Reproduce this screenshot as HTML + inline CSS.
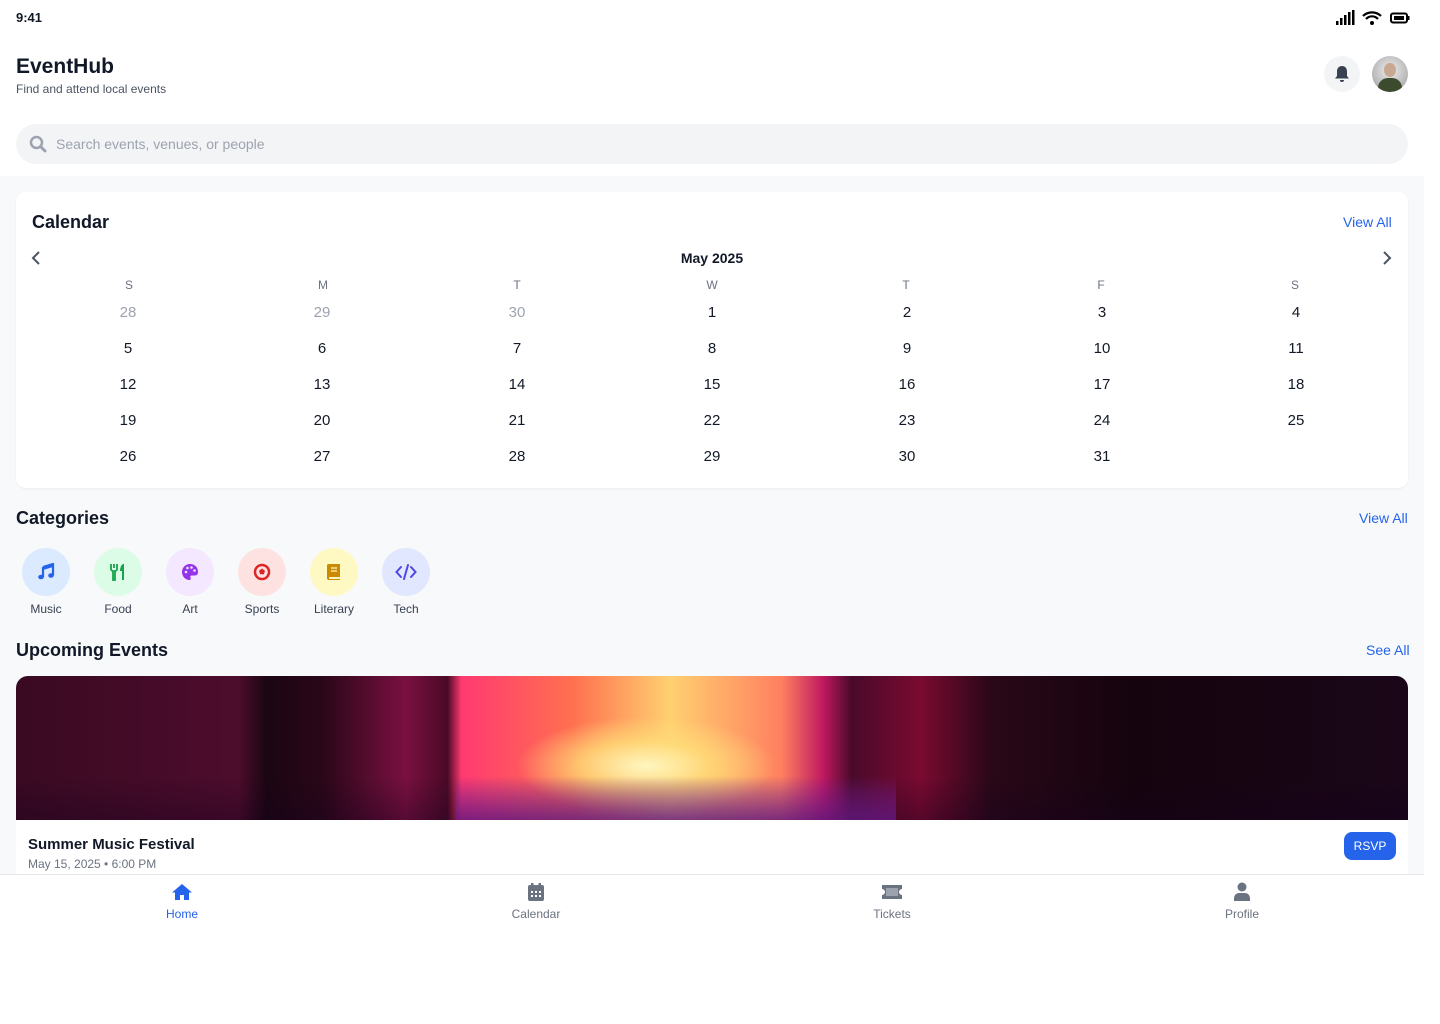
<!DOCTYPE html>
<html><head><meta charset="utf-8"><style>
*{box-sizing:border-box;margin:0;padding:0}
body{width:1440px;height:1024px;background:#fff;font-family:"Liberation Sans",sans-serif;position:relative;overflow:hidden;color:#111827}
.abs{position:absolute}
.main{position:absolute;left:0;top:176px;width:1424px;height:698px;background:#f8f9fb}
.card{position:absolute;left:16px;top:192px;width:1392px;height:296px;background:#fff;border-radius:10px;box-shadow:0 1px 2px rgba(0,0,0,.05)}
.dow{position:absolute;top:278px;font-size:12px;color:#6b7280;width:60px;text-align:center}
.day{position:absolute;font-size:15px;color:#111827;width:60px;text-align:center}
.gray{color:#9ca3af}
.link{position:absolute;font-size:14px;color:#2563eb}
.h2{position:absolute;font-size:18px;font-weight:bold;color:#111827}
.cat{position:absolute;top:548px;width:48px;height:48px;border-radius:50%;display:flex;align-items:center;justify-content:center}
.catl{position:absolute;top:602px;font-size:12px;color:#374151;width:72px;text-align:center}
.nav{position:absolute;top:907px;font-size:12px;color:#6b7280;width:100px;text-align:center}
</style></head><body>
<div class="abs" style="left:16px;top:10px;font-size:13px;font-weight:bold">9:41</div>
<svg class="abs" style="left:1335px;top:10px" width="76" height="16" viewBox="0 0 76 16">
<rect x="1" y="11" width="2.5" height="4" fill="#000"/><rect x="5" y="8" width="2.5" height="7" fill="#000"/><rect x="9" y="5" width="2.5" height="10" fill="#000"/><rect x="13" y="2" width="2.5" height="13" fill="#000"/><rect x="17" y="0" width="2.5" height="15" fill="#000"/>
<path d="M28 6a13 13 0 0 1 18 0M31 9a8 8 0 0 1 12 0" stroke="#000" stroke-width="2.2" fill="none"/><circle cx="37" cy="13" r="2" fill="#000"/>
<rect x="56" y="3.5" width="16" height="9" rx="2" fill="none" stroke="#000" stroke-width="2"/><rect x="59" y="6" width="10" height="4" fill="#000"/><rect x="73" y="6" width="1.5" height="4" fill="#000"/>
</svg>
<div class="abs" style="left:16px;top:55px;font-size:21px;font-weight:bold;color:#111827">EventHub</div>
<div class="abs" style="left:16px;top:82px;font-size:12px;color:#4b5563">Find and attend local events</div>
<div class="abs" style="left:1324px;top:56px;width:36px;height:36px;border-radius:50%;background:#f3f4f6"></div>
<svg class="abs" style="left:1334px;top:65px" width="16" height="18" viewBox="0 0 16 18"><path d="M8 1c-3 0-5 2.3-5 5.3V11l-2 2.5h14L13 11V6.3C13 3.3 11 1 8 1z" fill="#374151"/><path d="M6 15h4a2 2 0 0 1-4 0z" fill="#374151"/></svg>
<div class="abs" style="left:1372px;top:56px;width:36px;height:36px;border-radius:50%;background:radial-gradient(circle at 50% 40%,#eee,#999);overflow:hidden">
<div class="abs" style="left:12px;top:7px;width:12px;height:14px;border-radius:50%;background:#c9a892"></div>
<div class="abs" style="left:6px;top:22px;width:24px;height:16px;border-radius:10px 10px 0 0;background:#3c4a2e"></div></div>
<div class="abs" style="left:16px;top:124px;width:1392px;height:40px;border-radius:20px;background:#f3f4f6"></div>
<svg class="abs" style="left:29px;top:135px" width="18" height="18" viewBox="0 0 18 18"><circle cx="7.5" cy="7.5" r="5.5" stroke="#9ca3af" stroke-width="2.5" fill="none"/><path d="M11.5 11.5l4.5 4.5" stroke="#9ca3af" stroke-width="3" stroke-linecap="round"/></svg>
<div class="abs" style="left:56px;top:136px;font-size:14px;color:#9ca3af">Search events, venues, or people</div>

<div class="main"></div>
<div class="card"></div>
<div class="h2" style="left:32px;top:212px">Calendar</div>
<div class="link" style="left:1343px;top:214px">View All</div>
<svg class="abs" style="left:30px;top:250px" width="12" height="16" viewBox="0 0 12 16"><path d="M9 2L3 8l6 6" stroke="#4b5563" stroke-width="2" fill="none"/></svg>
<svg class="abs" style="left:1381px;top:250px" width="12" height="16" viewBox="0 0 12 16"><path d="M3 2l6 6-6 6" stroke="#4b5563" stroke-width="2" fill="none"/></svg>
<div class="abs" style="left:612px;top:250px;width:200px;text-align:center;font-size:14px;font-weight:bold;color:#111827">May 2025</div>
<div class="dow" style="left:99px">S</div><div class="dow" style="left:293px">M</div><div class="dow" style="left:487px">T</div><div class="dow" style="left:682px">W</div><div class="dow" style="left:876px">T</div><div class="dow" style="left:1071px">F</div><div class="dow" style="left:1265px">S</div>
<div id="days"></div>
<script>
var xs=[98,292,487,682,877,1072,1266],rows=[[28,29,30,1,2,3,4],[5,6,7,8,9,10,11],[12,13,14,15,16,17,18],[19,20,21,22,23,24,25],[26,27,28,29,30,31,""]],h="";
rows.forEach(function(r,i){r.forEach(function(d,j){h+='<div class="day'+(i==0&&j<3?' gray':'')+'" style="left:'+xs[j]+'px;top:'+(304+i*36)+'px">'+d+'</div>';});});
document.getElementById('days').innerHTML=h;
</script>

<div class="h2" style="left:16px;top:508px">Categories</div>
<div class="link" style="left:1359px;top:510px">View All</div>
<div class="cat" style="left:22px;background:#dbeafe"><svg width="18" height="18" viewBox="0 0 18 18"><path d="M6 4l10-3v11.5" stroke="#2563eb" stroke-width="2.2" fill="none"/><path d="M6 4v10" stroke="#2563eb" stroke-width="2.2"/><ellipse cx="4" cy="14" rx="2.8" ry="2.3" fill="#2563eb"/><ellipse cx="14" cy="12.5" rx="2.8" ry="2.3" fill="#2563eb"/><path d="M6 4l10-3v3L6 7z" fill="#2563eb"/></svg></div>
<div class="cat" style="left:94px;background:#dcfce7"><svg width="18" height="18" viewBox="0 0 18 18"><path d="M2 1v5a2 2 0 0 0 2 2h0v9h2V8a2 2 0 0 0 2-2V1M5 1v4" stroke="#16a34a" stroke-width="1.8" fill="none"/><path d="M14 1c-2 1-3 4-3 7h2v9h2V1z" fill="#16a34a"/></svg></div>
<div class="cat" style="left:166px;background:#f3e8ff"><svg width="18" height="18" viewBox="0 0 18 18"><path d="M9 1C4.5 1 1 4.5 1 9s3.5 8 7.5 8c1.5 0 1.5-1.5 1-2.5s0-2 1.5-2H14c2 0 3-1.5 3-3.5C17 4 13.5 1 9 1z" fill="#9333ea"/><circle cx="5" cy="9" r="1.3" fill="#f3e8ff"/><circle cx="6.5" cy="5" r="1.3" fill="#f3e8ff"/><circle cx="10.5" cy="4.5" r="1.3" fill="#f3e8ff"/><circle cx="13.5" cy="7.5" r="1.3" fill="#f3e8ff"/></svg></div>
<div class="cat" style="left:238px;background:#fee2e2"><svg width="18" height="18" viewBox="0 0 18 18"><circle cx="9" cy="9" r="7" stroke="#dc2626" stroke-width="2.5" fill="none"/><path d="M9 5.5l3 2.2-1.1 3.5H7.1L6 7.7z" fill="#dc2626"/></svg></div>
<div class="cat" style="left:310px;background:#fef9c3"><svg width="16" height="18" viewBox="0 0 16 18"><path d="M2 1h12v13H4a1 1 0 0 0 0 2h10v1H3a2 2 0 0 1-2-2V2z" fill="#ca8a04"/><path d="M5 5h6M5 8h6" stroke="#fef9c3" stroke-width="1.3"/></svg></div>
<div class="cat" style="left:382px;background:#e0e7ff"><svg width="22" height="16" viewBox="0 0 22 16"><path d="M6 3L1.5 8 6 13M16 3l4.5 5L16 13M13 1L9 15" stroke="#4f46e5" stroke-width="2" fill="none" stroke-linecap="round"/></svg></div>
<div class="catl" style="left:10px">Music</div><div class="catl" style="left:82px">Food</div><div class="catl" style="left:154px">Art</div><div class="catl" style="left:226px">Sports</div><div class="catl" style="left:298px">Literary</div><div class="catl" style="left:370px">Tech</div>

<div class="h2" style="left:16px;top:640px">Upcoming Events</div>
<div class="link" style="left:1366px;top:642px">See All</div>
<div class="abs" style="left:16px;top:676px;width:1392px;height:198px;background:#fff;border-radius:12px 12px 0 0;overflow:hidden">
<div class="abs" style="left:0;top:0;width:1392px;height:144px;background:linear-gradient(90deg,#3a0a22 0%,#4d0c2c 16%,#1b0612 18%,#2a0718 22%,#7a1040 28%,#4a0a26 31%,#ff3a70 32%,#ff7050 40%,#ffd070 47%,#ff8060 55%,#c01860 58%,#4a0a2a 60%,#7a0a30 65%,#2a0818 70%,#15040e 80%,#1a0618 100%)"></div>
<div class="abs" style="left:500px;top:40px;width:260px;height:100px;border-radius:50%;background:radial-gradient(ellipse,#fff6c0 0%,rgba(255,220,120,.8) 35%,rgba(255,120,80,0) 70%)"></div>
<div class="abs" style="left:440px;top:100px;width:440px;height:44px;background:linear-gradient(180deg,rgba(160,30,140,0),rgba(150,40,200,.7))"></div>
<div class="abs" style="left:0;top:100px;width:1392px;height:44px;background:linear-gradient(180deg,rgba(0,0,0,0),rgba(20,0,30,.35))"></div>
<div class="abs" style="left:12px;top:160px;font-size:15px;font-weight:bold;color:#111827">Summer Music Festival</div>
<div class="abs" style="left:12px;top:181px;font-size:12px;color:#6b7280">May 15, 2025 • 6:00 PM</div>
<div class="abs" style="left:1328px;top:156px;width:52px;height:28px;border-radius:8px;background:#2563eb;color:#fff;font-size:12px;text-align:center;line-height:28px">RSVP</div>
</div>
<div class="abs" style="left:0;top:874px;width:1424px;height:1px;background:#e5e7eb"></div>
<svg class="abs" style="left:171px;top:883px" width="22" height="18" viewBox="0 0 22 18"><path d="M11 1L1 9.5h3V17h5v-5h4v5h5V9.5h3z" fill="#2563eb"/></svg>
<svg class="abs" style="left:527px;top:882px" width="18" height="20" viewBox="0 0 18 20"><rect x="4" y="1" width="2.5" height="4" fill="#6b7280"/><rect x="11.5" y="1" width="2.5" height="4" fill="#6b7280"/><rect x="1" y="3" width="16" height="16" rx="2" fill="#6b7280"/><g fill="#fff"><rect x="4" y="9" width="2" height="2"/><rect x="8" y="9" width="2" height="2"/><rect x="12" y="9" width="2" height="2"/><rect x="4" y="13" width="2" height="2"/><rect x="8" y="13" width="2" height="2"/><rect x="12" y="13" width="2" height="2"/></g></svg>
<svg class="abs" style="left:881px;top:884px" width="22" height="16" viewBox="0 0 22 16"><path d="M1 1h20v4a3 3 0 0 0 0 6v4H1v-4a3 3 0 0 0 0-6z" fill="#6b7280"/><rect x="5" y="4" width="12" height="8" fill="#9ca3af"/></svg>
<svg class="abs" style="left:1233px;top:882px" width="18" height="20" viewBox="0 0 18 20"><circle cx="9" cy="5" r="4.5" fill="#6b7280"/><path d="M1 19v-3a5 5 0 0 1 5-5h6a5 5 0 0 1 5 5v3z" fill="#6b7280"/></svg>
<div class="nav" style="left:132px;color:#2563eb">Home</div>
<div class="nav" style="left:486px">Calendar</div>
<div class="nav" style="left:842px">Tickets</div>
<div class="nav" style="left:1192px">Profile</div>
</body></html>
